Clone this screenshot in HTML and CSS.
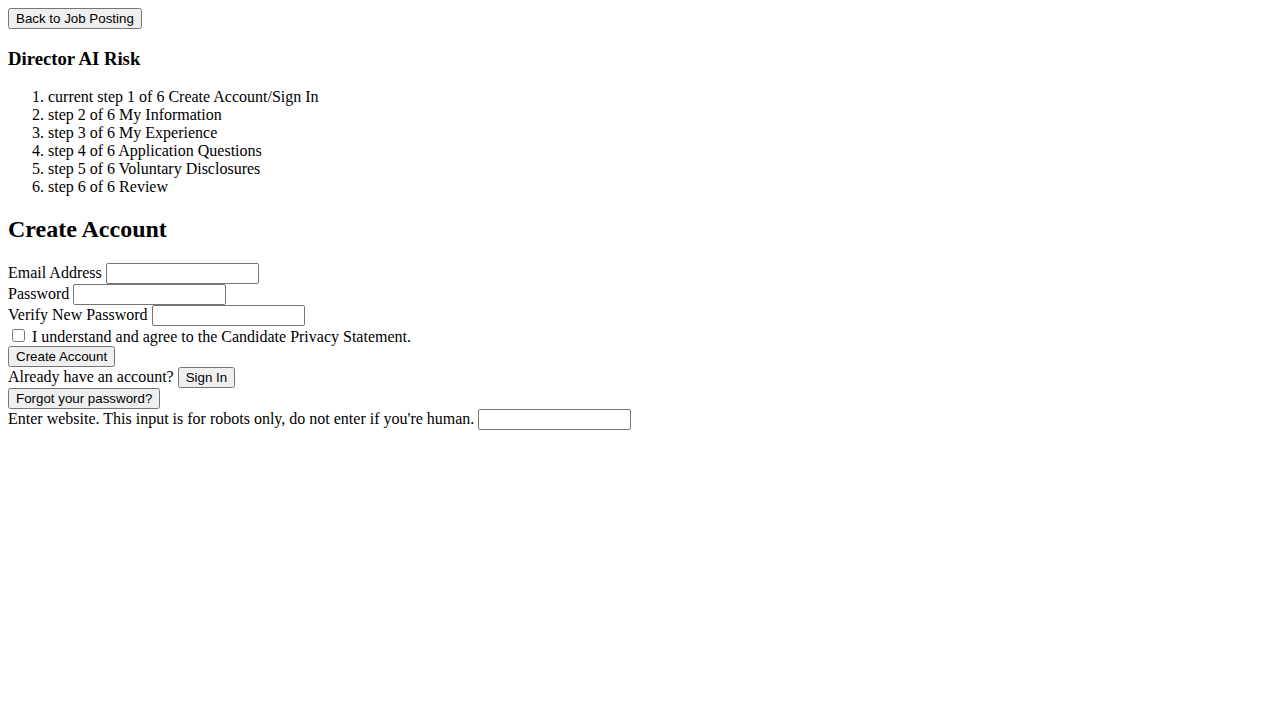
FILE: index.html
```html
<!DOCTYPE html>
<html lang="en">
<head>
<meta charset="utf-8">
<title>Create Account</title>
<link rel="stylesheet" href="styles.css">
</head>
<body class="page">
<button type="button" class="btn">Back to Job Posting</button>
<h3 class="job-title">Director AI Risk</h3>
<ol class="steps">
  <li>current step 1 of 6 Create Account/Sign In</li>
  <li>step 2 of 6 My Information</li>
  <li>step 3 of 6 My Experience</li>
  <li>step 4 of 6 Application Questions</li>
  <li>step 5 of 6 Voluntary Disclosures</li>
  <li>step 6 of 6 Review</li>
</ol>
<h2 class="form-title">Create Account</h2>
<form class="account-form">
  <div class="row"><label for="email">Email Address</label> <input class="field" id="email" type="text"></div>
  <div class="row"><label for="pw">Password</label> <input class="field" id="pw" type="password"></div>
  <div class="row"><label for="vpw">Verify New Password</label> <input class="field" id="vpw" type="password"></div>
  <div class="row"><input class="check" id="agree" type="checkbox"> <label for="agree">I understand and agree to the Candidate Privacy Statement.</label></div>
  <div class="row"><button type="button" class="btn">Create Account</button></div>
  <div class="row">Already have an account? <button type="button" class="btn">Sign In</button></div>
  <div class="row"><button type="button" class="btn">Forgot your password?</button></div>
  <div class="row"><label for="web">Enter website. This input is for robots only, do not enter if you're human.</label> <input class="field" id="web" type="text"></div>
</form>
</body>
</html>
```

FILE: styles.css
```css
.page {
  margin: 8px;
  font-family: "Liberation Serif", "Times New Roman", serif;
  font-size: 16px;
  color: #000;
  background: #fff;
}
.btn {
  font-family: "Liberation Sans", Arial, sans-serif;
  font-size: 13.333px;
}
.field {
  box-sizing: border-box;
  width: 153px;
  height: 21px;
  padding: 1px 2px;
  border: 1px solid #767676;
  border-radius: 2px;
  font-family: "Liberation Sans", Arial, sans-serif;
  font-size: 13.333px;
  vertical-align: baseline;
}
.job-title {
  font-size: 1.17em;
  margin: 1em 0;
}
.steps {
  margin: 1em 0;
  padding-left: 40px;
}
.form-title {
  font-size: 1.5em;
  margin: 0.83em 0;
}
.account-form {
  margin: 0;
}
```
